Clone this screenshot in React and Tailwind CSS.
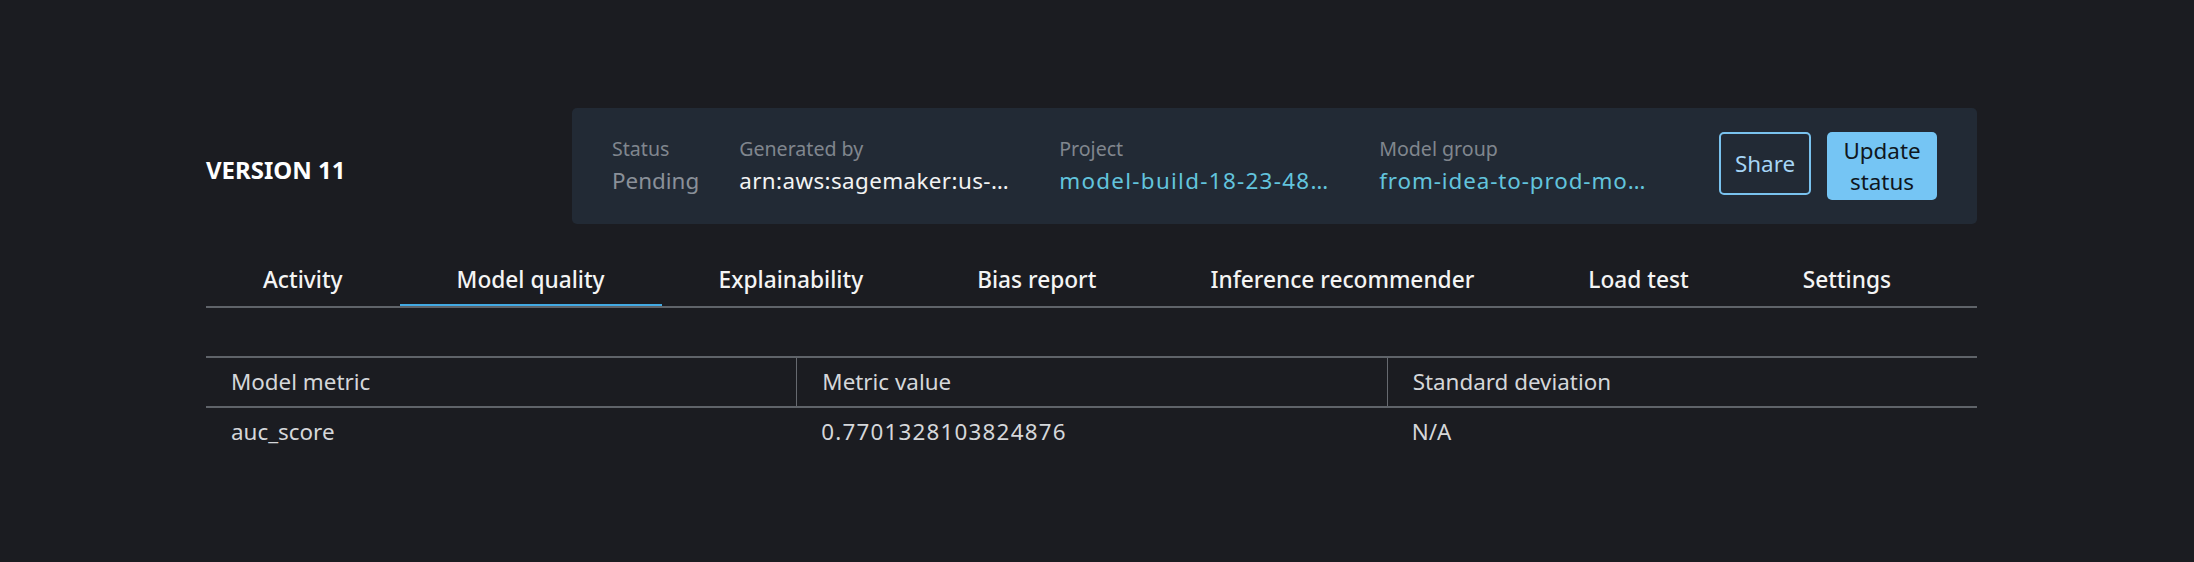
import * as React from 'react';

// Valores tal como se ven recortados en la cabecera
const fields = [
    { label: 'Status', value: 'Pending', tone: 'muted' },
    { label: 'Generated by', value: 'arn:aws:sagemaker:us-…', tone: 'text', wide: true, spacing: 'tracking-[0.4px]' },
    { label: 'Project', value: 'model-build-18-23-48…', tone: 'link', wide: true, spacing: 'tracking-[1.3px]' },
    { label: 'Model group', value: 'from-idea-to-prod-mo…', tone: 'link', wide: true, spacing: 'tracking-[0.9px]' },
];

const tabs = ['Activity', 'Model quality', 'Explainability', 'Bias report', 'Inference recommender', 'Load test', 'Settings'];

const toneClass = {
    muted: 'text-[#8a9099]',
    text: 'text-[#f2f3f3]',
    link: 'text-[#62c4dd]',
};

function Field({ label, value, tone, wide, spacing = '' }) {
    return (
        <div className={wide ? 'w-[280px]' : ''}>
            <div className="text-[19.6px] leading-[26px] text-[#80868e]">{label}</div>
            <div className={`mt-[3px] truncate text-[22.4px] leading-[32px] ${toneClass[tone]} ${spacing}`}>{value}</div>
        </div>
    );
}

export default function App() {
    const activeTab = 'Model quality';

    return (
        <div className="min-h-screen bg-[#1b1c21] font-['Noto_Sans',sans-serif] text-[#f2f3f3]">
            <div className="ml-[206px] w-[1771px] pt-[108px]">
                {/* Cabecera: versión + resumen */}
                <div className="flex items-center">
                    <h1 className="w-[366px] pt-[7px] text-[24px] font-bold leading-[32px] text-white">VERSION 11</h1>
                    <div className="flex h-[116px] flex-1 items-center rounded-[5px] bg-[#222a35] px-[40px]">
                        <div className="flex gap-[40px]">
                            {fields.map((f) => (
                                <Field key={f.label} {...f} />
                            ))}
                        </div>
                        <div className="ml-auto flex items-start gap-[16px]">
                            <button className="h-[63px] w-[92px] rounded-[5px] border-2 border-[#79c2ee] text-[22.4px] text-[#a6d5f6]">
                                Share
                            </button>
                            <button className="h-[68px] w-[110px] rounded-[5px] bg-[#75c5f4] text-[22.4px] leading-[31px] text-[#0f1620]">
                                Update
                                <br />
                                status
                            </button>
                        </div>
                    </div>
                </div>

                {/* Pestañas */}
                <div className="mt-[40px] flex border-b-2 border-[#5f6369]">
                    {tabs.map((t) => (
                        <button
                            key={t}
                            className={`border-b-2 px-[57px] pb-[8px] text-[22.7px] font-medium leading-[32px] text-[#f4f4f4] ${
                                t === activeTab ? 'border-[#42a9e3]' : 'border-transparent'
                            }`}
                        >
                            {t}
                        </button>
                    ))}
                </div>

                {/* Tabla de métricas */}
                <div className="mt-[48px] text-[22.4px] leading-[32px] text-[#d5d7da]">
                    <div className="grid grid-cols-3 border-y-2 border-[#5f6369]">
                        <div className="px-[25px] py-[8px]">Model metric</div>
                        <div className="border-l border-[#66696f] px-[25px] py-[8px]">Metric value</div>
                        <div className="border-l border-[#66696f] px-[25px] py-[8px]">Standard deviation</div>
                    </div>
                    <div className="grid grid-cols-3">
                        <div className="px-[25px] py-[8px]">auc_score</div>
                        <div className="px-[25px] py-[8px] tracking-[1.2px]">0.7701328103824876</div>
                        <div className="px-[25px] py-[8px]">N/A</div>
                    </div>
                </div>
            </div>
        </div>
    );
}
